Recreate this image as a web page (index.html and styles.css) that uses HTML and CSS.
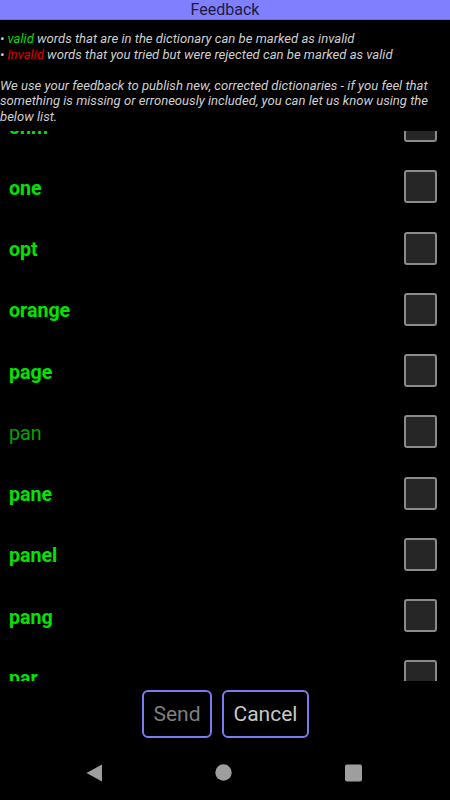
FILE: index.html
```html
<!DOCTYPE html>
<html lang="en">
<head>
    <meta charset="UTF-8">
    <meta name="viewport" content="width=device-width, initial-scale=1.0">
    <title>Feedback</title>
    <link rel="stylesheet" href="styles.css">
</head>
<body>
    <div class="screen">
        <div class="title-bar">Feedback</div>

        <div class="intro">• <span class="ok">valid</span> words that are in the dictionary can be marked as invalid
• <span class="bad">invalid</span> words that you tried but were rejected can be marked as valid

We use your feedback to publish new, corrected dictionaries - if you feel that something is missing or erroneously included, you can let us know using the below list.</div>

        <div class="word-list">
            <div class="word-scroll">
                <label class="word-row"><span class="word">ohm</span><input type="checkbox" class="mark"></label>
                <label class="word-row"><span class="word">one</span><input type="checkbox" class="mark"></label>
                <label class="word-row"><span class="word">opt</span><input type="checkbox" class="mark"></label>
                <label class="word-row"><span class="word">orange</span><input type="checkbox" class="mark"></label>
                <label class="word-row"><span class="word">page</span><input type="checkbox" class="mark"></label>
                <label class="word-row"><span class="word tried">pan</span><input type="checkbox" class="mark"></label>
                <label class="word-row"><span class="word">pane</span><input type="checkbox" class="mark"></label>
                <label class="word-row"><span class="word">panel</span><input type="checkbox" class="mark"></label>
                <label class="word-row"><span class="word">pang</span><input type="checkbox" class="mark"></label>
                <label class="word-row"><span class="word">par</span><input type="checkbox" class="mark"></label>
                <label class="word-row"><span class="word">park</span><input type="checkbox" class="mark"></label>
            </div>
        </div>

        <div class="actions">
            <button class="btn send">Send</button>
            <button class="btn cancel">Cancel</button>
        </div>

        <div class="nav-bar">
            <svg class="nav-icon" width="16" height="18" viewBox="0 0 16 18"><path d="M16 0.5 L16 17.5 L0.5 9 Z" fill="#9e9e9e"/></svg>
            <svg class="nav-icon" width="17" height="17" viewBox="0 0 17 17"><circle cx="8.5" cy="8.5" r="8.2" fill="#9e9e9e"/></svg>
            <svg class="nav-icon" width="17" height="18" viewBox="0 0 17 18"><rect x="0" y="0.5" width="17" height="17" rx="2" fill="#9e9e9e"/></svg>
        </div>
    </div>
</body>
</html>
```

FILE: styles.css
```css
body {
    margin: 0;
    background-color: #000;
    font-family: Roboto, "Liberation Sans", sans-serif;
}

.screen {
    width: 450px;
    height: 800px;
    display: flex;
    flex-direction: column;
    overflow: hidden;
}

.title-bar {
    height: 19px;
    line-height: 20px;
    background-color: #8080ff;
    border-bottom: 1px solid #6c6ce6;
    color: #1c1c3c;
    font-size: 16px;
    text-align: center;
}

.intro {
    white-space: pre-line;
    padding: 11px 0 7px 0;
    height: 93px;
    font-size: 13.1px;
    font-style: italic;
    line-height: 15.5px;
    color: #cfcfcf;
}

.intro .ok {
    color: #00dd00;
}

.intro .bad {
    color: #e00000;
}

.word-list {
    height: 550px;
    overflow: hidden;
    flex-shrink: 0;
}

.word-scroll {
    margin-top: -36px;
}

.word-row {
    display: flex;
    align-items: center;
    justify-content: space-between;
    height: 61.25px;
    padding: 0 13px 0 9px;
}

.word {
    margin-top: 3px;
    font-size: 19.6px;
    font-weight: bold;
    color: #00e400;
}

.word.tried {
    font-weight: normal;
    color: #00a600;
}

.mark {
    appearance: none;
    -webkit-appearance: none;
    margin: 0;
    width: 33px;
    height: 33px;
    box-sizing: border-box;
    border: 2px solid #8a8a8a;
    border-radius: 3px;
    background-color: #262626;
}

.actions {
    display: flex;
    justify-content: center;
    gap: 10px;
    margin-top: 9px;
    margin-left: 1px;
}

.btn {
    height: 48px;
    padding: 0 6px;
    background-color: #000;
    border: 2px solid #7a7af2;
    border-radius: 6px;
    font-family: Roboto, "Liberation Sans", sans-serif;
    font-size: 21px;
}

.btn.send {
    width: 70px;
    color: #7f7f7f;
}

.btn.cancel {
    width: 87px;
    color: #c8c8c8;
}

.nav-bar {
    display: flex;
    justify-content: space-between;
    align-items: center;
    margin-top: 7px;
    height: 55px;
    padding: 0 88px 0 86px;
}
```
